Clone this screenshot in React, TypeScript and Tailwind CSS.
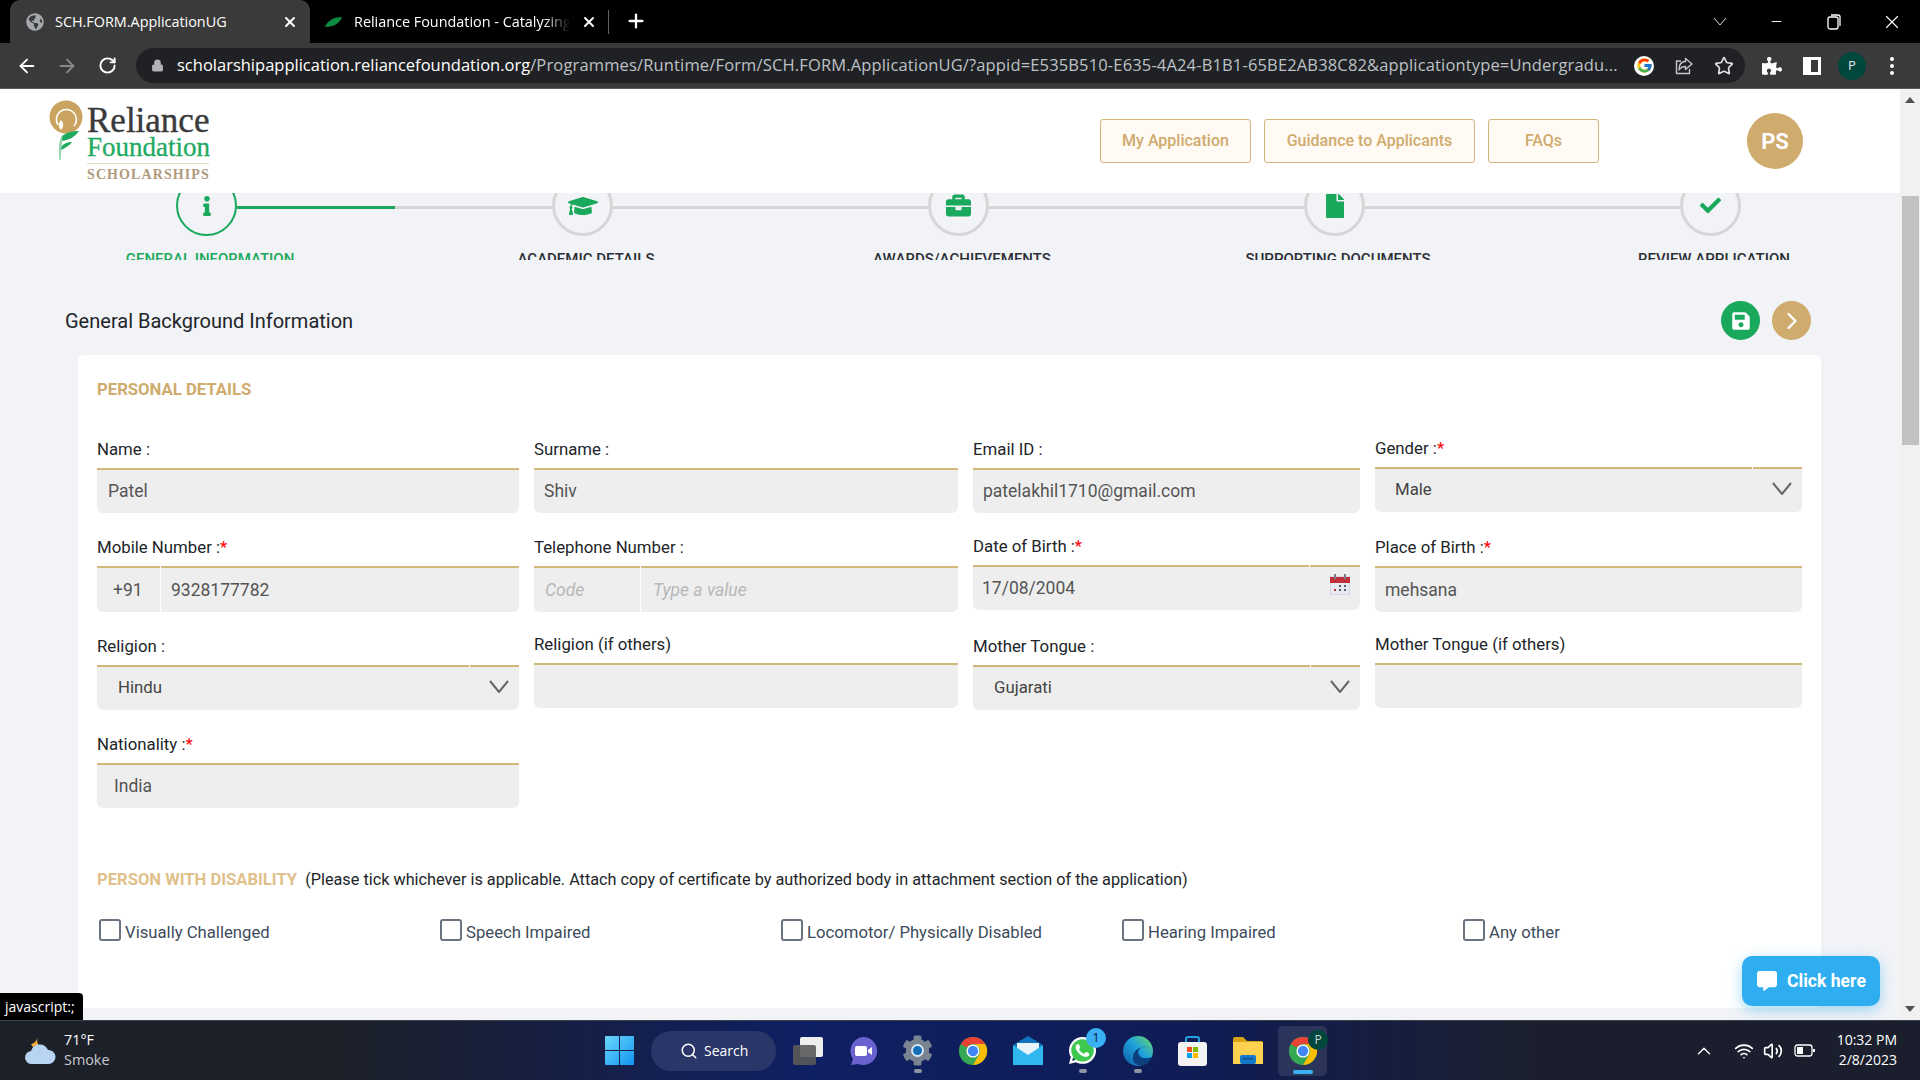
import { Fragment, ReactNode } from 'react';
import { ArrowLeft, ArrowRight, RotateCw, Lock, Star, Search, ChevronUp, ChevronRight, Wifi, Volume2, X, Plus, Minus } from 'lucide-react';
import { FaInfo, FaGraduationCap, FaBriefcase, FaFile, FaCheck, FaSave, FaPuzzlePiece, FaGlobeAmericas, FaWhatsapp, FaCog, FaCommentAlt } from 'react-icons/fa';
import { FcGoogle } from 'react-icons/fc';

const steps = [
  { label: 'General Information', icon: <FaInfo size={20} />, active: true },
  { label: 'Academic Details', icon: <FaGraduationCap size={30} /> },
  { label: 'Awards/Achievements', icon: <FaBriefcase size={25} /> },
  { label: 'Supporting Documents', icon: <FaFile size={24} /> },
  { label: 'Review Application', icon: <FaCheck size={21} /> },
];

function Chevron() {
  return (
    <svg width="20" height="13" viewBox="0 0 20 13" fill="none" stroke="#666" strokeWidth="2">
      <path d="M1 1l9 11 9-11" />
    </svg>
  );
}

function Cell({ label, req, shift = '', children }: { label: string; req?: boolean; shift?: string; children?: ReactNode }) {
  return (
    <div className={shift}>
      <div className="h-[38px] leading-[39px] text-[16.8px] text-[#212529]">
        {label}
        {req && <span className="text-[#ff0000]">*</span>}
      </div>
      {children}
    </div>
  );
}

function Input({ value, pad = 'pl-[11px]', h = 'h-[45px]' }: { value?: string; pad?: string; h?: string }) {
  return (
    <div className={`${h} ${pad} flex items-center bg-[#eeeeee] border-t-2 border-[#d2b67c] rounded-b-[6px] text-[17.5px] text-[#555555]`}>
      {value}
    </div>
  );
}

function Select({ value, pad = 'pl-[21px]' }: { value: string; pad?: string }) {
  return (
    <div className={`relative h-[45px] ${pad} pr-[10px] flex items-center justify-between bg-[#eeeeee] border-t-2 border-[#d2b67c] rounded-b-[6px] text-[16.8px] text-[#444444]`}>
      <span className="-mt-[2px]">{value}</span>
      <span className="absolute -top-[2px] right-[49px] w-px h-[2px] bg-white" />
      <span className="-mt-[4px]"><Chevron /></span>
    </div>
  );
}

function Split({ left, right, leftW, ph }: { left: string; right: string; leftW: string; ph?: boolean }) {
  const txt = ph ? 'italic text-[#b8b8b8]' : 'text-[#555555]';
  return (
    <div className={`flex gap-px h-[46px] text-[17.5px] ${txt}`}>
      <div className={`${leftW} ${ph ? 'pl-[11px]' : 'pl-[16px]'} flex items-center bg-[#eeeeee] border-t-2 border-[#d2b67c] rounded-bl-[6px]`}>{left}</div>
      <div className={`flex-1 ${ph ? 'pl-[12px]' : 'pl-[10px]'} flex items-center bg-[#eeeeee] border-t-2 border-[#d2b67c] rounded-br-[6px]`}>{right}</div>
    </div>
  );
}

function Check({ label }: { label: string }) {
  return (
    <div className="w-[341px] shrink-0 flex items-start gap-[4px]">
      <span className="w-[22px] h-[22px] bg-white border-2 border-[#6b7280] rounded-[3px]" />
      <span className="text-[16.7px] leading-[24px] mt-[2px] text-[#3d4b5c]">{label}</span>
    </div>
  );
}

function ChromeLogo({ size = 30 }: { size?: number }) {
  return (
    <svg width={size} height={size} viewBox="0 0 32 32">
      <circle cx="16" cy="16" r="15" fill="#34a853" />
      <path d="M16 1a15 15 0 0 1 13 7.5H16a7.5 7.5 0 0 0-6.5 3.75L3 8.5A15 15 0 0 1 16 1z" fill="#ea4335" />
      <path d="M29 8.5A15 15 0 0 1 16 31l6.5-11.25A7.5 7.5 0 0 0 22.5 12.25 7.5 7.5 0 0 0 16 8.5z" fill="#fbbc04" />
      <circle cx="16" cy="16" r="7" fill="#fff" />
      <circle cx="16" cy="16" r="5.5" fill="#4285f4" />
    </svg>
  );
}

function Tile({ children, dot }: { children: ReactNode; dot?: boolean }) {
  return (
    <div className="relative w-[55px] h-full flex items-center justify-center">
      {children}
      {dot && <span className="absolute bottom-[7px] w-[8px] h-[4px] rounded-full bg-[#8d93a3]" />}
    </div>
  );
}

function Logo() {
  return (
    <div className="flex items-start" style={{ fontFamily: '"Liberation Serif", serif' }}>
      <svg width="38" height="76" viewBox="0 0 38 76" className="mt-[1px]">
        <circle cx="17" cy="17" r="16.5" fill="#c9a35f" />
        <path d="M9 25A10 10 0 1 1 25 26" fill="none" stroke="#fff" strokeWidth="1.6" />
        <path d="M12 30c-3-3-3-7 0-10 3 3 3 7 0 10z" fill="#fff" />
        <path d="M13 36c5-4 11-5 17-5-4 6-10 9-17 10z" fill="#1fa95f" />
        <path d="M12 47c3-4 7-5 11-5-3 4-7 6-11 8z" fill="#1fa95f" />
        <path d="M13 36c-3 7-3 15-2 24 1-8 1-16 2-24z" fill="#8fd3ac" stroke="#8fd3ac" strokeWidth="1" />
      </svg>
      <div className="w-[122px] flex flex-col">
        <span className="text-[35px] leading-[31px] mt-[6px] text-[#3a3a3a] [-webkit-text-stroke:0.4px_#3a3a3a]">Reliance</span>
        <span className="text-[27px] leading-[23px] text-[#1eaa60] [-webkit-text-stroke:0.3px_#1eaa60]">Foundation</span>
        <span className="h-px mt-[4px] bg-[#e7d9c8]" />
        <span className="text-[14px] leading-[16px] mt-[3px] font-bold tracking-[1.1px] text-[#b09a7c] whitespace-nowrap">SCHOLARSHIPS</span>
      </div>
    </div>
  );
}

export default function App() {
  const ui = { fontFamily: '"Open Sans", sans-serif' };
  return (
    <div className="relative w-[1920px] h-[1080px] overflow-hidden flex flex-col bg-[#f2f3f7]" style={{ fontFamily: 'Roboto, sans-serif' }}>
      {/* browser tabs */}
      <div className="h-[43px] shrink-0 bg-black flex text-white text-[14.4px]" style={ui}>
        <div className="ml-[10px] w-[300px] bg-[#3a3a3a] rounded-t-[10px] flex items-center pl-[16px] pr-[12px]">
          <FaGlobeAmericas size={18} className="text-[#a5a8ad]" />
          <span className="ml-[11px]">SCH.FORM.ApplicationUG</span>
          <X size={16} strokeWidth={3} className="ml-auto" />
        </div>
        <div className="w-[298px] flex items-center pl-[15px] pr-[11px]">
          <svg width="17" height="10" viewBox="0 0 17 10"><path d="M0 10C3 3 9 0 17 0c-2 6-8 10-17 10z" fill="#0d8a43" /></svg>
          <span className="ml-[12px] w-[216px] overflow-hidden whitespace-nowrap [mask-image:linear-gradient(to_right,black_88%,transparent)]">Reliance Foundation - Catalyzing India</span>
          <X size={16} strokeWidth={3} className="ml-auto" />
        </div>
        <div className="w-px h-[24px] mt-[10px] bg-[#5f6368]" />
        <Plus size={22} strokeWidth={2.5} className="ml-[16px] mt-[10px]" />
        <div className="ml-auto flex items-center text-white">
          <svg width="14" height="9" viewBox="0 0 14 9" fill="none" stroke="#ddd"><path d="M1 1l6 7 6-7" /></svg>
          <Minus size={15} strokeWidth={1.5} className="ml-[42px]" />
          <svg width="14" height="16" viewBox="0 0 14 16" fill="none" stroke="#fff" strokeWidth="1.3" className="ml-[43px]"><rect x="1" y="3" width="10" height="12" rx="2" /><path d="M4 1h7a2 2 0 0 1 2 2v9" /></svg>
          <X size={22} strokeWidth={1.2} className="ml-[40px] mr-[17px]" />
        </div>
      </div>

      {/* browser toolbar */}
      <div className="h-[46px] shrink-0 bg-[#3a3a3a] border-b border-[#5a5a5a] flex items-center pl-[7px]" style={ui}>
        <span className="w-[40px] flex justify-center"><ArrowLeft size={22} className="text-white" /></span>
        <span className="w-[40px] flex justify-center"><ArrowRight size={22} className="text-[#8a8a8a]" /></span>
        <span className="w-[40px] flex justify-center"><RotateCw size={19} strokeWidth={2.4} className="text-white" /></span>
        <div className="ml-[9px] w-[1609px] h-[35px] bg-[#202124] rounded-full flex items-center pl-[15px] text-[16.5px]">
          <Lock size={13} fill="#b0b2b6" className="text-[#b0b2b6]" />
          <span className="ml-[13px] w-[1441px] whitespace-nowrap overflow-hidden text-[#bdc1c6] tracking-[0.15px]">
            <span className="text-white tracking-normal">scholarshipapplication.reliancefoundation.org</span>
            /Programmes/Runtime/Form/SCH.FORM.ApplicationUG/?appid=E535B510-E635-4A24-B1B1-65BE2AB38C82&amp;applicationtype=Undergradu...
          </span>
          <span className="ml-[16px] w-[20px] h-[20px] bg-white rounded-full flex items-center justify-center"><FcGoogle size={17} /></span>
          <svg width="20" height="20" viewBox="0 0 20 20" fill="none" stroke="#c4c7c5" strokeWidth="1.4" strokeLinejoin="round" className="ml-[20px]">
            <path d="M7 5H2.5v12.5h13V13" />
            <path d="M11.5 2.5L18 8l-6.5 5.5V10.5c-3 0-5 1-6.5 3.500 0-5.500 2.500-8.500 6.500-8.500z" />
          </svg>
          <Star size={20} strokeWidth={2} className="ml-[20px] text-[#e0e0e0]" />
        </div>
        <span className="ml-[7px] w-[40px] flex justify-center"><FaPuzzlePiece size={20} className="text-white" /></span>
        <span className="w-[40px] flex justify-center">
          <span className="w-[18px] h-[18px] border-[3px] border-l-[8px] border-white" />
        </span>
        <span className="w-[40px] flex justify-center">
          <span className="w-[28px] h-[28px] rounded-full bg-[#00473e] text-[#e5e5e5] text-[13px] flex items-center justify-center">P</span>
        </span>
        <span className="w-[40px] flex flex-col items-center gap-[3px]">
          <i className="w-[4px] h-[4px] rounded-full bg-white" />
          <i className="w-[4px] h-[4px] rounded-full bg-white" />
          <i className="w-[4px] h-[4px] rounded-full bg-white" />
        </span>
      </div>

      <div className="flex-1 flex min-h-0">
        <div className="w-[1900px] flex flex-col min-h-0">
          {/* site header */}
          <div className="h-[104px] shrink-0 bg-white flex items-center pl-[49px] pr-[97px]">
            <Logo />
            <div className="ml-auto flex gap-[13px] text-[16px] font-medium text-[#cfab6d]">
              <span className="w-[151px] h-[44px] flex items-center justify-center bg-[#fffaf3] border border-[#d4b47c] rounded-[3px]">My Application</span>
              <span className="w-[211px] h-[44px] flex items-center justify-center bg-[#fffaf3] border border-[#d4b47c] rounded-[3px]">Guidance to Applicants</span>
              <span className="w-[111px] h-[44px] flex items-center justify-center bg-[#fffaf3] border border-[#d4b47c] rounded-[3px]">FAQs</span>
            </div>
            <span className="ml-[148px] w-[56px] h-[56px] rounded-full bg-[#cfab6d] text-white font-bold text-[22px] flex items-center justify-center">PS</span>
          </div>

          <div className="h-[67px] shrink-0 overflow-hidden">
            <div className="-mt-[18px] h-[61px] flex items-center pl-[176px] pr-[159px]">
              {steps.map((s, i) => (
                <Fragment key={s.label}>
                  {i > 0 && (
                    <div className="flex-1 h-[3px] mt-[3px] bg-[#d4d5d5]">
                      {i === 1 && <div className="w-[158px] h-full bg-[#1aa85c]" />}
                    </div>
                  )}
                  <div className={`w-[61px] h-[61px] shrink-0 rounded-full flex items-center justify-center text-[#1aa85c] ${s.active ? 'border-2 border-[#1aa85c]' : 'border-[3px] border-[#d6d6d6]'}`}>
                    {s.icon}
                  </div>
                </Fragment>
              ))}
            </div>
            <div className="mt-[13px] ml-[22px] w-[1880px] grid grid-cols-5 text-center text-[15px] leading-[20px] font-medium uppercase">
              {steps.map((s) => (
                <span key={s.label} className={s.active ? 'text-[#1aa85c]' : 'text-[#2b2f36]'}>{s.label}</span>
              ))}
            </div>
          </div>

          {/* title row */}
          <div className="mt-[41px] h-[39px] shrink-0 flex items-center pl-[65px] pr-[89px]">
            <h1 className="text-[20px] text-[#212529]">General Background Information</h1>
            <span className="ml-auto w-[39px] h-[39px] rounded-full bg-[#1aa85c] flex items-center justify-center text-white"><FaSave size={20} /></span>
            <span className="ml-[12px] w-[39px] h-[39px] rounded-full bg-[#cfab6d] flex items-center justify-center text-white"><ChevronRight size={28} strokeWidth={2} /></span>
          </div>

          {/* form card */}
          <div className="mt-[15px] ml-[78px] w-[1743px] h-[653px] shrink-0 bg-white rounded-[6px] px-[19px] pt-[23px]">
            <h2 className="text-[16.7px] leading-[24px] font-bold text-[#cfab6d]">PERSONAL DETAILS</h2>
            <div className="mt-[28px] grid grid-cols-[422px_424px_387px_427px] grid-rows-[98px_99px_98px_98px] gap-x-[15px]">
              <Cell label="Name :"><Input value="Patel" /></Cell>
              <Cell label="Surname :"><Input value="Shiv" pad="pl-[10px]" /></Cell>
              <Cell label="Email ID :"><Input value="patelakhil1710@gmail.com" pad="pl-[10px]" /></Cell>
              <Cell label="Gender :" req shift="-mt-[1px]"><Select value="Male" pad="pl-[20px]" /></Cell>

              <Cell label="Mobile Number :" req><Split left="+91" right="9328177782" leftW="w-[63px]" /></Cell>
              <Cell label="Telephone Number :"><Split left="Code" right="Type a value" leftW="w-[106px]" ph /></Cell>
              <Cell label="Date of Birth :" req shift="-mt-[1px]">
                <div className="relative h-[45px] pl-[9px] flex items-center bg-[#eeeeee] border-t-2 border-[#d2b67c] rounded-b-[6px] text-[17.5px] text-[#555555]">
                  17/08/2004
                  <span className="absolute -top-[2px] right-[50px] w-px h-[2px] bg-white" />
                  <svg width="20" height="21" viewBox="0 0 20 21" className="absolute right-[10px] top-[7px]">
                    <rect x="0" y="3" width="20" height="18" fill="#e8eaf0" stroke="#b9bdc7" strokeWidth="0.8" />
                    <rect x="0" y="3" width="20" height="6" fill="#c0303a" />
                    <rect x="4" y="0" width="2" height="5" fill="#7a7f8a" />
                    <rect x="14" y="0" width="2" height="5" fill="#7a7f8a" />
                    <rect x="4" y="15" width="2" height="2" fill="#c0303a" />
                    <rect x="9" y="11" width="2" height="2" fill="#555b6e" />
                    <rect x="9" y="15" width="2" height="2" fill="#555b6e" />
                    <rect x="14" y="11" width="2" height="2" fill="#555b6e" />
                    <rect x="14" y="15" width="2" height="2" fill="#555b6e" />
                  </svg>
                </div>
              </Cell>
              <Cell label="Place of Birth :" req><Input value="mehsana" pad="pl-[10px]" h="h-[46px]" /></Cell>

              <Cell label="Religion :"><Select value="Hindu" /></Cell>
              <Cell label="Religion (if others)" shift="-mt-[2px]"><Input /></Cell>
              <Cell label="Mother Tongue :"><Select value="Gujarati" /></Cell>
              <Cell label="Mother Tongue (if others)" shift="-mt-[2px]"><Input /></Cell>

              <Cell label="Nationality :" req><Input value="India" pad="pl-[17px]" /></Cell>
            </div>

            <div className="mt-[45px] leading-[24px] whitespace-nowrap">
              <span className="text-[16.6px] font-bold text-[#dfc08a]">PERSON WITH DISABILITY</span>
              <span className="ml-[8px] text-[16.25px] text-[#212529]">(Please tick whichever is applicable. Attach copy of certificate by authorized body in attachment section of the application)</span>
            </div>
            <div className="mt-[27px] ml-[2px] flex">
              <Check label="Visually Challenged" />
              <Check label="Speech Impaired" />
              <Check label="Locomotor/ Physically Disabled" />
              <Check label="Hearing Impaired" />
              <Check label="Any other" />
            </div>
          </div>
        </div>

        {/* page scrollbar */}
        <div className="w-[20px] bg-[#f1f1f1] flex flex-col items-center">
          <svg width="10" height="6" viewBox="0 0 10 6" className="mt-[8px]"><path d="M0 6l5-6 5 6z" fill="#505050" /></svg>
          <div className="mt-[93px] w-[17px] h-[249px] bg-[#c1c1c1]" />
          <svg width="10" height="6" viewBox="0 0 10 6" className="mt-auto mb-[8px]"><path d="M0 0l5 6 5-6z" fill="#505050" /></svg>
        </div>
      </div>

      {/* windows taskbar */}
      <div className="h-[60px] shrink-0 flex items-center text-white border-t border-[#3b3f4a] bg-[linear-gradient(90deg,#1c2029_0%,#1c2029_18%,#0f1f63_42%,#0f1c55_62%,#1b1f2d_80%,#1b1f2d_100%)]" style={ui}>
        <div className="w-[605px] h-full flex items-center pl-[24px] shrink-0">
          <svg width="32" height="30" viewBox="0 0 32 30">
            <path d="M14 1c-2 5 0 10 6 11-5 3-11 1-13-4 2 0 5-2 7-7z" fill="#f2a93b" />
            <path d="M8 28a6.5 6.5 0 0 1-1-13 9 9 0 0 1 17-1 7 7 0 0 1 1 14z" fill="#b9d3f2" />
          </svg>
          <div className="ml-[8px] -mt-[2px] text-[14.4px] leading-[20px]">
            <div>71°F</div>
            <div className="text-[#c8cad0]">Smoke</div>
          </div>
        </div>
        <svg width="29" height="29" viewBox="0 0 29 29" className="shrink-0">
          <defs>
            <linearGradient id="win" x1="0" y1="0" x2="1" y2="1">
              <stop offset="0" stopColor="#6bd6fa" />
              <stop offset="1" stopColor="#1295f2" />
            </linearGradient>
          </defs>
          <path d="M0 1a1 1 0 0 1 1-1h13v14H0zM15 0h13a1 1 0 0 1 1 1v13H15zM0 15h14v14H1a1 1 0 0 1-1-1zM15 15h14v13a1 1 0 0 1-1 1H15z" fill="url(#win)" />
        </svg>
        <div className="ml-[17px] w-[125px] h-[40px] rounded-full bg-[#2a3668] flex items-center pl-[29px] text-[14px]">
          <Search size={18} />
          <span className="ml-[6px]">Search</span>
        </div>
        <div className="ml-[4px] h-full flex">
          <Tile>
            <div className="relative w-[30px] h-[28px]">
              <span className="absolute right-0 top-0 w-[23px] h-[20px] rounded-[2px] bg-[#eeeeee]" />
              <span className="absolute left-0 bottom-0 w-[23px] h-[20px] rounded-[2px] bg-[#5a5a5a]/90" />
            </div>
          </Tile>
          <Tile>
            <svg width="30" height="30" viewBox="0 0 30 30">
              <path d="M15 1a14 14 0 1 1-5 27l-7 1 2-6A14 14 0 0 1 15 1z" fill="#6a63cf" />
              <rect x="7" y="10" width="12" height="10" rx="2" fill="#fff" />
              <path d="M20 14l4-3v8l-4-3z" fill="#fff" />
            </svg>
          </Tile>
          <Tile dot>
            <span className="relative flex items-center justify-center">
              <FaCog size={31} className="text-[#7a8490]" />
              <span className="absolute w-[13px] h-[13px] rounded-full bg-[#0f6fb8] border-2 border-[#d5e5f2]" />
            </span>
          </Tile>
          <Tile><ChromeLogo /></Tile>
          <Tile>
            <svg width="30" height="29" viewBox="0 0 30 29">
              <path d="M15 0l15 9v20H0V9z" fill="#1173bd" />
              <path d="M4 7h22v6l-11 7-11-7z" fill="#e9f3fb" />
              <path d="M0 9l15 10L30 9v20H0z" fill="#2fb8ef" />
            </svg>
          </Tile>
          <Tile dot>
            <span className="relative flex items-center justify-center">
              <span className="absolute w-[24px] h-[24px] rounded-full bg-[#3fc84f]" />
              <FaWhatsapp size={31} className="relative text-white" />
              <span className="absolute -top-[7px] -right-[8px] w-[20px] h-[20px] rounded-full bg-[#3ab0f5] text-[#10203a] text-[13px] flex items-center justify-center">1</span>
            </span>
          </Tile>
          <Tile dot>
            <svg width="30" height="30" viewBox="0 0 30 30">
              <defs>
                <linearGradient id="edge" x1="0" y1="1" x2="1" y2="0">
                  <stop offset="0" stopColor="#0c59a4" />
                  <stop offset="0.55" stopColor="#1fa3dc" />
                  <stop offset="1" stopColor="#6fdc5e" />
                </linearGradient>
              </defs>
              <circle cx="15" cy="15" r="15" fill="url(#edge)" />
              <path d="M30 17c-1-5-6-7-10-6-4 1-6 5-4 8 2 4 8 4 13 2-2 6-8 9-14 8-3-1-5-3-5-7 0-7 5-11 12-11 4 0 7 2 8 6z" fill="#0c3f7d" />
            </svg>
          </Tile>
          <Tile>
            <svg width="29" height="30" viewBox="0 0 29 30">
              <path d="M8 8V3a2 2 0 0 1 2-2h9a2 2 0 0 1 2 2v5" fill="none" stroke="#1fa3e0" strokeWidth="2" />
              <rect x="0" y="6" width="29" height="24" rx="3" fill="#f3f3f3" />
              <rect x="9" y="11" width="5" height="5" fill="#f25022" />
              <rect x="15" y="11" width="5" height="5" fill="#7fba00" />
              <rect x="9" y="17" width="5" height="5" fill="#00a4ef" />
              <rect x="15" y="17" width="5" height="5" fill="#ffb900" />
            </svg>
          </Tile>
          <Tile>
            <svg width="30" height="27" viewBox="0 0 30 27">
              <path d="M0 2a2 2 0 0 1 2-2h8l4 4h14a2 2 0 0 1 2 2v4H0z" fill="#d9a514" />
              <path d="M0 5h30v22H0z" fill="#ffd34f" />
              <rect x="7" y="18" width="16" height="9" rx="2" fill="#1679c9" />
              <rect x="10" y="21" width="10" height="1.5" fill="#0d4f8f" />
            </svg>
          </Tile>
          <div className="relative w-[55px] h-full flex items-center justify-center">
            <span className="absolute top-[5px] w-[49px] h-[50px] rounded-[5px] bg-white/10" />
            <span className="relative"><ChromeLogo /></span>
            <span className="absolute top-[9px] right-[2px] w-[20px] h-[20px] rounded-full bg-[#00473e] text-[#d5d5d5] text-[12px] flex items-center justify-center">P</span>
            <span className="absolute bottom-[6px] w-[20px] h-[4px] rounded-full bg-[#3ab0f5]" />
          </div>
        </div>
        <div className="ml-auto pr-[23px] flex items-center">
          <ChevronUp size={22} strokeWidth={1.5} />
          <Wifi size={20} className="ml-[19px]" />
          <Volume2 size={20} className="ml-[9px]" />
          <svg width="22" height="13" viewBox="0 0 22 13" className="ml-[11px]" fill="none" stroke="#fff" strokeWidth="1.3">
            <rect x="1" y="1" width="17" height="11" rx="2.5" />
            <rect x="3" y="3" width="6" height="7" fill="#fff" stroke="none" />
            <path d="M20 5v3" strokeWidth="2" />
          </svg>
          <div className="ml-[21px] -mt-[2px] text-right text-[14px] leading-[20px]">
            <div>10:32 PM</div>
            <div>2/8/2023</div>
          </div>
        </div>
      </div>

      {/* link status bubble */}
      <div className="absolute left-0 bottom-[60px] w-[83px] h-[27px] bg-black rounded-tr-[4px] text-white text-[14px] flex items-center pl-[5px]" style={ui}>javascript:;</div>

      {/* chat button */}
      <div className="absolute left-[1742px] top-[956px] w-[138px] h-[50px] rounded-[10px] bg-[#2eaef0] shadow-[0_4px_14px_rgba(46,174,240,0.45)] flex items-center pl-[15px] text-white font-bold text-[17.6px]">
        <FaCommentAlt size={20} />
        <span className="ml-[10px]">Click here</span>
      </div>
    </div>
  );
}
